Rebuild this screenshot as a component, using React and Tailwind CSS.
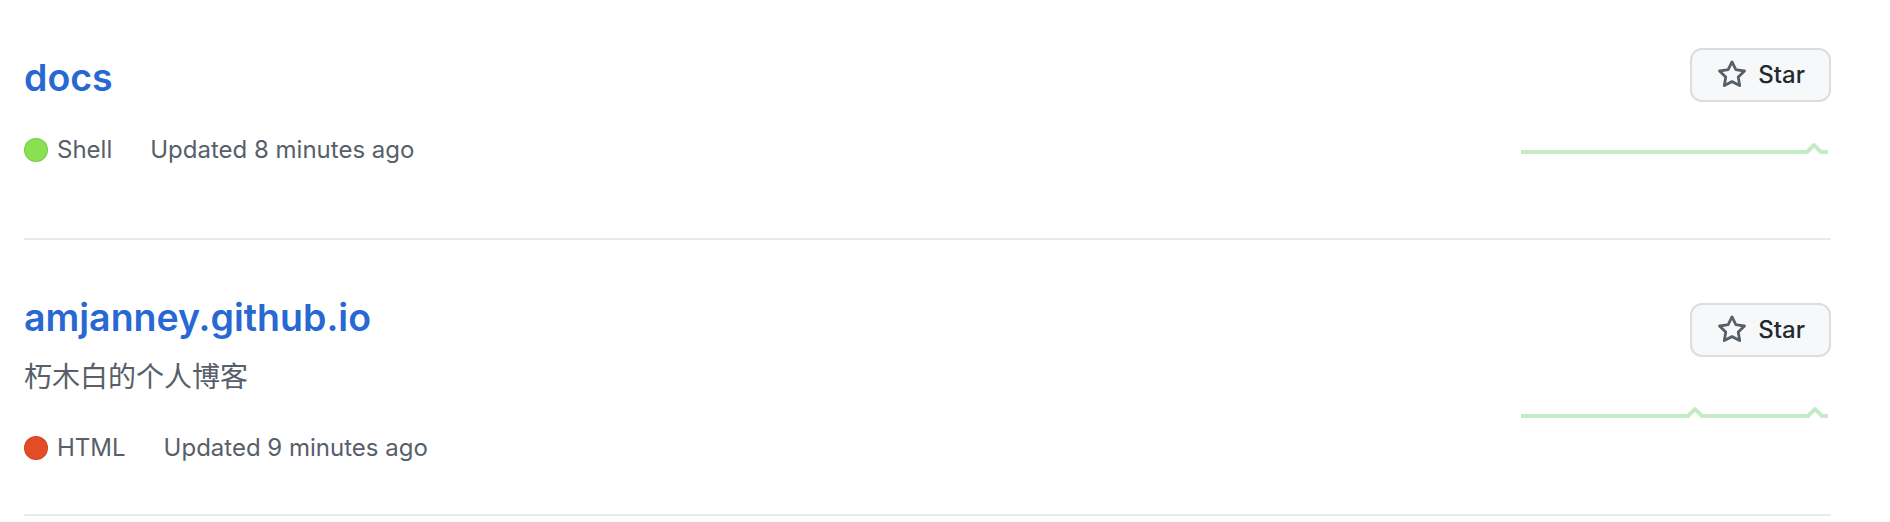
import React from 'react';

const repos = [
  {
    name: 'docs',
    description: null,
    language: 'Shell',
    color: '#89e051',
    updated: 'Updated 8 minutes ago',
    metaGap: 'mt-[24px]',
    starTop: 'mt-0',
    sparkTop: 'mt-[28px]',
    spark: '0,22 286,22 293,15 300,22 307,22',
  },
  {
    name: 'amjanney.github.io',
    description: '朽木白的个人博客',
    language: 'HTML',
    color: '#e34c26',
    updated: 'Updated 9 minutes ago',
    metaGap: 'mt-[32px]',
    starTop: 'mt-[15px]',
    sparkTop: 'mt-[37px]',
    spark: '0,22 167,22 174,15 181,22 287,22 294,15 301,22 307,22',
  },
];

const StarIcon = () => (
  <svg viewBox="0 0 16 16" width="30" height="30" fill="#57606a">
    <path d="M8 .25a.75.75 0 0 1 .673.418l1.882 3.815 4.21.612a.75.75 0 0 1 .416 1.279l-3.046 2.97.719 4.192a.751.751 0 0 1-1.088.791L8 12.347l-3.766 1.98a.75.75 0 0 1-1.088-.79l.72-4.194L.818 6.374a.75.75 0 0 1 .416-1.28l4.21-.611L7.327.668A.75.75 0 0 1 8 .25Zm0 2.445L6.615 5.5a.75.75 0 0 1-.564.41l-3.097.45 2.24 2.184a.75.75 0 0 1 .216.664l-.528 3.084 2.769-1.456a.75.75 0 0 1 .698 0l2.77 1.456-.53-3.084a.75.75 0 0 1 .216-.664l2.24-2.183-3.096-.45a.75.75 0 0 1-.564-.41L8 2.694Z" />
  </svg>
);

const RepoRow = ({ repo }) => (
  <li className="flex justify-between py-[48px] border-b-2 border-[#e8eaed]">
    {/* Left: title, description, meta */}
    <div className="flex flex-col">
      <h3 className="text-[37.5px] leading-[60px] font-semibold text-[#2868d3]">{repo.name}</h3>
      {repo.description && (
        <p className="mt-[8px] text-[28px] leading-[42px] text-[#57606a]">{repo.description}</p>
      )}
      <div className={`${repo.metaGap} flex items-center text-[24px] leading-[36px] text-[#57606a]`}>
        <span className="flex items-center mr-[38px]">
          <span
            className="inline-block w-[24px] h-[24px] rounded-full border border-black/10 mr-[9px]"
            style={{ backgroundColor: repo.color }}
          />
          {repo.language}
        </span>
        <span>{repo.updated}</span>
      </div>
    </div>

    {/* Right: star button + activity sparkline */}
    <div className="flex flex-col items-end">
      <button className={`${repo.starTop} flex items-center gap-[11px] h-[54px] pl-[25px] pr-[24px] rounded-[12px] border-2 border-[#dadde1] bg-[#f6f8fa] text-[24px] font-medium text-[#24292f]`}>
        <StarIcon />
        Star
      </button>
      <svg className={repo.sparkTop} width="310" height="60">
        <polyline points={repo.spark} fill="none" stroke="#c3ebc6" strokeWidth="4" strokeLinejoin="round" />
      </svg>
    </div>
  </li>
);

export default function App() {
  return (
    <div className="bg-white w-[1890px] min-h-[522px] font-['Inter','Noto_Sans_CJK_SC',sans-serif]">
      <ul className="ml-[24px] w-[1807px]">
        {repos.map((r) => (
          <RepoRow key={r.name} repo={r} />
        ))}
      </ul>
    </div>
  );
}
